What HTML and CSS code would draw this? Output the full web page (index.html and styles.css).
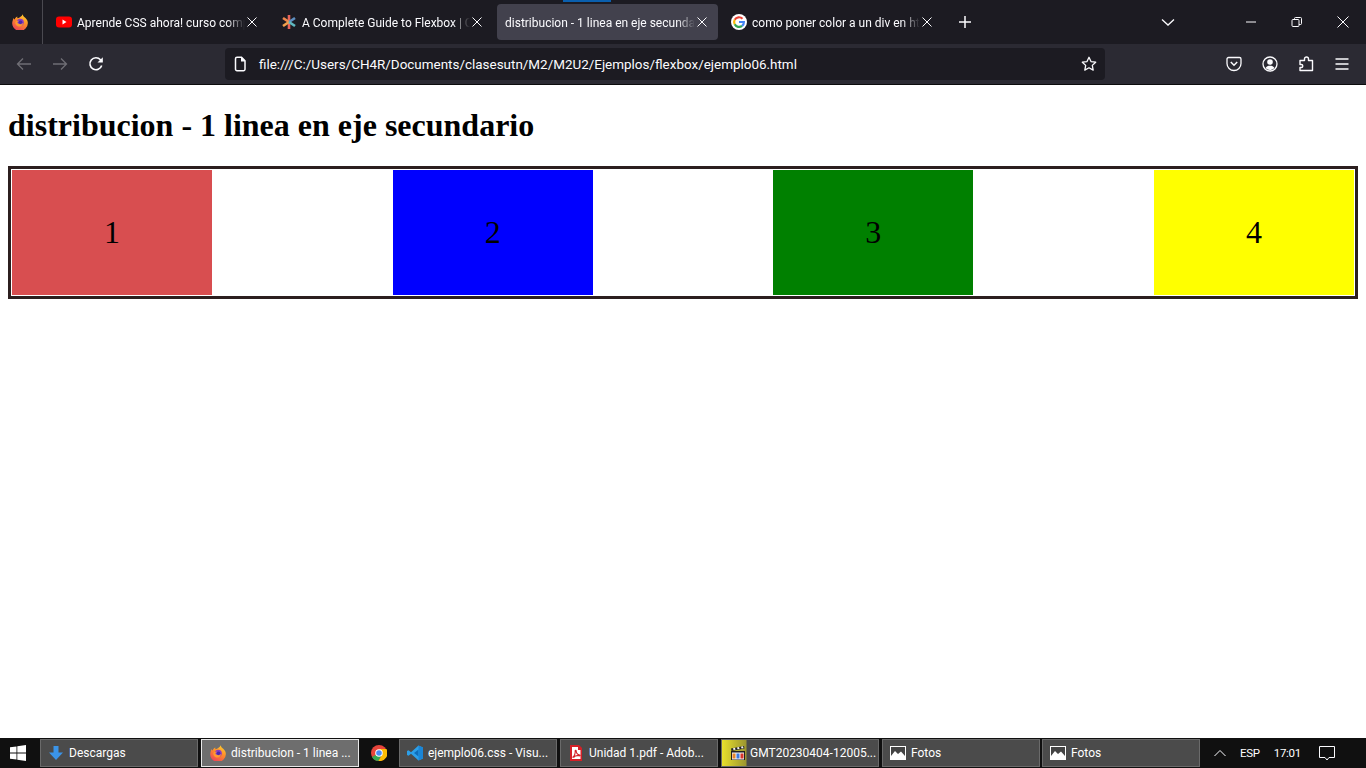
FILE: index.html
```html
<!DOCTYPE html>
<html lang="es">
<head>
<meta charset="utf-8">
<title>distribucion - 1 linea en eje secundario</title>
<link rel="stylesheet" href="styles.css">
</head>
<body>
<header class="browser">
  <div class="tabbar">
    <div class="ff-button">
      <svg class="i16" viewBox="0 0 16 16"><defs><linearGradient id="ffa" x1="0.75" y1="0" x2="0.25" y2="1"><stop offset="0" stop-color="#ffd02e"/><stop offset="0.45" stop-color="#ff8a2a"/><stop offset="1" stop-color="#ec3f5c"/></linearGradient></defs><path d="M10.800.2c.1 1.800 1.500 2.600 2.700 3.900 1.500 1.500 2.300 3.100 2.300 4.500A7.800 7.800 0 1 1 .7 6.500c.2-1 .5-1.800 1-2.500.2.700.5 1.200 1 1.500.3-1.500 1.300-2.500 2.700-3-.3.700-.2 1.300.2 1.700C7.500 3.500 9.800 2.500 10.800.2z" fill="url(#ffa)"/><circle cx="8.300" cy="8.300" r="3.500" fill="#8a3cc4"/><circle cx="8.500" cy="8.200" r="1.800" fill="#4a2aa8"/><path d="M3.300 8c.9-1.200 2.300-1.500 3.800-1-1.300.3-1.700 1-1.600 1.800.9 1.700 4 2.200 5.800 0-.4 2.300-2 3.700-3.800 3.700-2.500 0-4.500-2-4.200-4.500z" fill="#ff9a2e"/></svg>
    </div>
    <div class="tabs">
      <div class="tab">
        <svg class="i16" viewBox="0 0 16 16"><rect y="2.500" width="16" height="11" rx="3" fill="#f00"/><path d="M6.500 5.600v4.800L10.500 8z" fill="#fff"/></svg>
        <span class="tab-title">Aprende CSS ahora! curso completo</span>
        <svg class="tab-close" viewBox="0 0 12 12"><path d="M1.500 1.500l9 9M10.500 1.500l-9 9"/></svg>
      </div>
      <div class="tab">
        <svg class="i16" viewBox="0 0 16 16"><g stroke-width="2.600"><path d="M8 8V1" stroke="#e8655a"/><path d="M8 8L2 4" stroke="#f0884c"/><path d="M8 8l6-4" stroke="#5f8fc0"/><path d="M8 8v7" stroke="#e8655a"/><path d="M8 8l-6 4" stroke="#f0a04c"/><path d="M8 8l6 4" stroke="#5fb8c0"/></g></svg>
        <span class="tab-title">A Complete Guide to Flexbox | CSS-Tricks</span>
        <svg class="tab-close" viewBox="0 0 12 12"><path d="M1.500 1.500l9 9M10.500 1.500l-9 9"/></svg>
      </div>
      <div class="tab tab-active">
        <span class="tab-indicator"></span>
        <span class="tab-title">distribucion - 1 linea en eje secundario</span>
        <svg class="tab-close" viewBox="0 0 12 12"><path d="M1.500 1.500l9 9M10.500 1.500l-9 9"/></svg>
      </div>
      <div class="tab">
        <svg class="i16" viewBox="0 0 16 16"><circle cx="8" cy="8" r="8" fill="#fff"/><g fill="none" stroke-width="2.200"><path d="M11.500 4.800A4.900 4.900 0 0 0 3.700 5.700" stroke="#ea4335"/><path d="M3.700 5.700a4.900 4.900 0 0 0 0 4.600" stroke="#fbbc05"/><path d="M3.700 10.300a4.900 4.900 0 0 0 7.400 1.600" stroke="#34a853"/><path d="M11.100 11.900A4.900 4.900 0 0 0 12.900 8H8" stroke="#4285f4"/></g></svg>
        <span class="tab-title">como poner color a un div en html</span>
        <svg class="tab-close" viewBox="0 0 12 12"><path d="M1.500 1.500l9 9M10.500 1.500l-9 9"/></svg>
      </div>
    </div>
    <div class="tool-btn"><svg class="i16 line" viewBox="0 0 16 16"><path d="M8 2v12M2 8h12" stroke-width="1.500"/></svg></div>
    <div class="spacer"></div>
    <div class="tool-btn list-all"><svg class="i16 line" viewBox="0 0 16 16"><path d="M2 5.500l6 5.500 6-5.500" stroke-width="1.300"/></svg></div>
    <div class="win-btn"><svg class="i12 line" viewBox="0 0 12 12"><path d="M1 6h10"/></svg></div>
    <div class="win-btn"><svg class="i12 line" viewBox="0 0 12 12"><rect x="1" y="3.500" width="7" height="7" rx="1"/><path d="M3.500 3.500V2.500a1 1 0 0 1 1-1h5a1 1 0 0 1 1 1v5a1 1 0 0 1-1 1H8"/></svg></div>
    <div class="win-btn"><svg class="i12 line" viewBox="0 0 12 12"><path d="M.5.500l11 11M11.500.500l-11 11"/></svg></div>
  </div>
  <div class="toolbar">
    <div class="tool-btn dim"><svg class="i16 line" viewBox="0 0 16 16"><path d="M15 8H1.500M7 2.500L1.500 8 7 13.500" stroke-width="1.300"/></svg></div>
    <div class="tool-btn dim"><svg class="i16 line" viewBox="0 0 16 16"><path d="M1 8h13.500M9 2.500L14.500 8 9 13.500" stroke-width="1.300"/></svg></div>
    <div class="tool-btn"><svg class="i16 line" viewBox="0 0 16 16"><path d="M13.700 9.500A6 6 0 1 1 12.500 3.800L14 5.500" stroke-width="1.600"/><path class="solid" d="M14.800 1.200V6.500H9.500z"/></svg></div>
    <div class="urlbar">
      <svg class="i16 line" viewBox="0 0 16 16"><path d="M3.500 2.800a1.500 1.500 0 0 1 1.500-1.500h4.500l3.500 3.500v8.400a1.500 1.500 0 0 1-1.500 1.500H5a1.500 1.500 0 0 1-1.500-1.500z" stroke-width="1.500"/><path class="solid" d="M9 1.500h1l3 3v1H9z"/></svg>
      <span class="url-text">file:///C:/Users/CH4R/Documents/clasesutn/M2/M2U2/Ejemplos/flexbox/ejemplo06.html</span>
      <svg class="i16 line" viewBox="0 0 16 16"><path d="M8 1.300l2 4.300 4.700.6-3.400 3.200.9 4.700L8 11.800l-4.200 2.300.9-4.700L1.300 6.200 6 5.600z" stroke-width="1.300" stroke-linejoin="round"/></svg>
    </div>
    <div class="tool-group">
      <div class="tool-btn"><svg class="i16 line" viewBox="0 0 16 16"><path d="M2.500 1.500h11A1.500 1.500 0 0 1 15 3v4.500a7 7 0 0 1-14 0V3a1.500 1.500 0 0 1 1.500-1.500z" stroke-width="1.300"/><path d="M4.800 6l3.200 3.200L11.200 6" stroke-width="1.500"/></svg></div>
      <div class="tool-btn"><svg class="i16 line" viewBox="0 0 16 16"><circle cx="8" cy="8" r="7" stroke-width="1.300"/><circle class="solid" cx="8" cy="6" r="2.800"/><path class="solid" d="M3.500 12c1-1.700 2.500-2.300 4.500-2.300s3.500.6 4.500 2.300A6 6 0 0 1 8 14a6 6 0 0 1-4.500-2z"/></svg></div>
      <div class="tool-btn"><svg class="i16 line" viewBox="0 0 16 16"><path d="M6.500 3.500V3a2 2 0 0 1 4 0v1.500H14.500v10H2V11.500h1.300a1.500 1.500 0 0 0 0-3H2V4.500h4.500z" stroke-width="1.400" stroke-linejoin="round"/></svg></div>
      <div class="tool-btn"><svg class="i16 line" viewBox="0 0 16 16"><path d="M1.500 3h13M1.500 8h13M1.500 13h13" stroke-width="1.400"/></svg></div>
    </div>
  </div>
</header>

<main class="page">
  <h1 class="page-title">distribucion - 1 linea en eje secundario</h1>
  <div class="flex-box">
    <div class="item item-red">1</div>
    <div class="item item-blue">2</div>
    <div class="item item-green">3</div>
    <div class="item item-yellow">4</div>
  </div>
</main>

<footer class="taskbar">
  <div class="start"><svg class="i16" viewBox="0 0 16 16"><path fill="#fff" d="M0 2.300l6.500-.9v6.200H0zM7.300 1.300L16 0v7.600H7.300zM0 8.400h6.500v6.200L0 13.700zM7.300 8.400H16V16l-8.700-1.200z"/></svg></div>
  <div class="task"><svg class="i16" viewBox="0 0 16 16"><path fill="#3b94e8" d="M5.500 1h5v6.500H15L8 15 1 7.500h4.500z"/></svg><span>Descargas</span></div>
  <div class="task task-on"><svg class="i16" viewBox="0 0 16 16"><path d="M10.800.2c.1 1.800 1.500 2.600 2.700 3.900 1.500 1.500 2.300 3.100 2.300 4.500A7.800 7.800 0 1 1 .7 6.500c.2-1 .5-1.800 1-2.500.2.700.5 1.200 1 1.500.3-1.500 1.300-2.500 2.700-3-.3.700-.2 1.300.2 1.700C7.500 3.500 9.800 2.500 10.800.2z" fill="url(#ffa)"/><circle cx="8.300" cy="8.300" r="3.500" fill="#8a3cc4"/><circle cx="8.500" cy="8.200" r="1.800" fill="#4a2aa8"/><path d="M3.300 8c.9-1.200 2.300-1.500 3.800-1-1.300.3-1.700 1-1.600 1.800.9 1.700 4 2.200 5.800 0-.4 2.300-2 3.700-3.800 3.700-2.500 0-4.500-2-4.200-4.500z" fill="#ff9a2e"/></svg><span>distribucion - 1 linea ...</span></div>
  <div class="task-icon"><svg class="i16" viewBox="0 0 16 16"><circle cx="8" cy="8" r="8" fill="#e8453c"/><path d="M8 8L1 12a8 8 0 0 0 6.500 4L12 8z" fill="#34a853"/><path d="M8 4h7.400A8 8 0 0 1 7.500 16L12 8z" fill="#fbbc05"/><circle cx="8" cy="8" r="3.800" fill="#fff"/><circle cx="8" cy="8" r="2.800" fill="#4a8bf5"/></svg></div>
  <div class="task"><svg class="i16" viewBox="0 0 16 16"><path fill="#2c9fe8" d="M11.500.5L16 2.500v11l-4.500 2L4 8.800 1.500 10.800 0 10V6l1.500-.8L4 7.200z"/><path fill="#0f6cb8" d="M11.500 4.500L7 8l4.500 3.500z"/><path fill="#1a85d6" d="M11.500.5L16 2.500v11l-4.500 2z"/></svg><span>ejemplo06.css - Visu...</span></div>
  <div class="task"><svg class="i16" viewBox="0 0 16 16"><path fill="#d42027" d="M2 0h9l3 3v13H2z"/><path fill="#fff" d="M4 2h6v3h2.500v9H4z"/><path fill="none" stroke="#d42027" stroke-width="1.100" d="M4.500 12.500c2-1.500 2.800-5 2.700-6.500-.1-1 1-.9 1 0 0 2 1.500 3.500 3.500 4 .8.200.5 1-.5.800-2.500-.5-4.500.2-5.500 1.500"/></svg><span>Unidad 1.pdf - Adob...</span></div>
  <div class="task task-flash"><svg class="i16" viewBox="0 0 16 16"><path fill="#222" d="M2 6h14v9H2z"/><path fill="#222" d="M2 3.500l13-2.500.5 2.500-13 2.500z"/><path fill="#f3f3f3" d="M4 3.200l2-.4.500 1.900-2 .4zM8 2.400l2-.4.500 1.900-2 .4zM12 1.700l2-.4.500 1.900-2 .4z"/><rect x="3" y="7.500" width="12" height="7" fill="#f4f4f4"/><rect x="3.500" y="8.500" width="3" height="5" fill="#e8862a"/><rect x="7.500" y="8.500" width="3" height="5" fill="#3a7be0"/><rect x="11.500" y="8.500" width="3" height="5" fill="#d8352a"/></svg><span>GMT20230404-12005...</span></div>
  <div class="task"><svg class="i16" viewBox="0 0 16 16"><rect x=".5" y="1.500" width="15" height="13" fill="#444" stroke="#fff"/><path fill="#fff" d="M1 14V11l4-5 3 3 3-2.500 4 4.500v3z"/></svg><span>Fotos</span></div>
  <div class="task task-last"><svg class="i16" viewBox="0 0 16 16"><rect x=".5" y="1.500" width="15" height="13" fill="#444" stroke="#fff"/><path fill="#fff" d="M1 14V11l4-5 3 3 3-2.500 4 4.500v3z"/></svg><span>Fotos</span></div>
  <div class="tray">
    <svg class="i12 line tray-up" viewBox="0 0 12 12"><path d="M.5 9L6 3.500 11.500 9"/></svg>
    <span class="tray-lang">ESP</span>
    <span class="tray-time">17:01</span>
    <svg class="i16 line tray-note" viewBox="0 0 16 16"><path d="M.5 1.500h15v11H10L8 15l-2-2.500H.5z"/></svg>
  </div>
</footer>
</body>
</html>
```
FILE: styles.css
```css
* { box-sizing: border-box; }
html, body { height: 100%; }
body {
  margin: 0;
  height: 100vh;
  overflow: hidden;
  display: flex;
  flex-direction: column;
  background: #fff;
}
svg { display: block; flex: none; }
.i16 { width: 16px; height: 16px; }
.i12 { width: 12px; height: 12px; }
.line { fill: none; stroke: #fbfbfe; stroke-width: 1; }
.line .solid { fill: #fbfbfe; stroke: none; }

/* browser chrome */
.browser { flex: none; font-family: Roboto, "Open Sans", sans-serif; color: #fbfbfe; }
.tabbar {
  height: 44px;
  display: flex;
  align-items: center;
  background: #1c1b22;
}
.ff-button {
  width: 43px;
  height: 44px;
  padding: 14px 0 0 12px;
  border-right: 1px solid #4a4950;
}
.tabs { display: flex; gap: 4px; padding: 0 4px; }
.tab {
  position: relative;
  width: 221px;
  height: 36px;
  padding: 0 10px 0 9px;
  display: flex;
  align-items: center;
  gap: 5px;
  border-radius: 4px;
  font-size: 12px;
}
.tab-close { margin-left: -4px; }
.tab-active { background: #42414d; padding-left: 8px; }
.tab-indicator {
  position: absolute;
  left: 66px;
  top: -4px;
  width: 48px;
  height: 2px;
  background: #0a5fae;
}
.tab-title {
  flex: 1;
  min-width: 0;
  padding-top: 1px;
  white-space: nowrap;
  overflow: hidden;
  -webkit-mask-image: linear-gradient(to right, #000 calc(100% - 18px), transparent);
  mask-image: linear-gradient(to right, #000 calc(100% - 18px), transparent);
}
.tab-close { width: 12px; height: 12px; fill: none; stroke: #fbfbfe; stroke-width: 1; }
.tool-btn {
  width: 36px;
  height: 40px;
  display: flex;
  align-items: center;
  justify-content: center;
}
.spacer { flex: 1; }
.list-all { margin-right: 42px; }
.win-btn {
  width: 46px;
  height: 44px;
  display: flex;
  align-items: center;
  justify-content: center;
}
.toolbar {
  height: 41px;
  padding: 0 0 0 6px;
  display: flex;
  align-items: center;
  background: #2b2a33;
  border-bottom: 1px solid #0c0c0d;
}
.dim .line { stroke: #6f6e75; }
.urlbar {
  width: 880px;
  height: 32px;
  margin-left: 111px;
  padding: 0 8px 0 7px;
  display: flex;
  align-items: center;
  gap: 11px;
  border-radius: 4px;
  background: #1c1b22;
  font-size: 13.45px;
}
.url-text { flex: 1; padding-top: 1px; white-space: nowrap; }
.tool-group { display: flex; margin-left: auto; padding-right: 6px; }

/* page */
.page { flex: 1; min-height: 0; padding: 1px 8px 0; color: #000; font-family: "Liberation Serif", serif; }
.page-title { margin: 21.44px 0; font-size: 32px; font-weight: bold; }
.flex-box {
  display: flex;
  justify-content: space-between;
  padding: 1px;
  border: 3px solid #2c1f1f;
}
.item {
  width: 200px;
  height: 125px;
  display: flex;
  align-items: center;
  justify-content: center;
  font-size: 32px;
}
.item-red { background: #d84e50; }
.item-blue { background: #00f; }
.item-green { background: #008000; }
.item-yellow { background: #ff0; }

/* taskbar */
.taskbar {
  flex: none;
  height: 30px;
  padding: 1px 0;
  display: flex;
  gap: 3px;
  background: #101010;
  font-family: Roboto, "Open Sans", sans-serif;
  font-size: 12px;
  color: #fff;
}
.start { width: 37px; padding: 6px 0 0 10px; }
.task {
  width: 158px;
  height: 28px;
  padding: 0 7px;
  display: flex;
  align-items: center;
  gap: 5px;
  background: #4b4b4b;
  border: 1px solid #6a6a6a;
  white-space: nowrap;
}
.task-on { background: #6e6e6e; border-color: #e8e8e8; padding-left: 8px; }
.task-icon { width: 40px; display: flex; align-items: center; justify-content: center; margin: 0 -3px; }
.task-flash { background: linear-gradient(to right, #e8e02c 0, #9c9630 24px, #4b4b4b 25px); }
.task-last { margin-left: -1px; }
.tray { flex: 1; display: flex; align-items: center; font-size: 11.5px; letter-spacing: -0.3px; }
.tray-up { margin-left: 11px; }
.tray-lang { margin-left: 14px; }
.tray-time { margin-left: 14px; }
.tray-note { margin-left: 18px; }
```
